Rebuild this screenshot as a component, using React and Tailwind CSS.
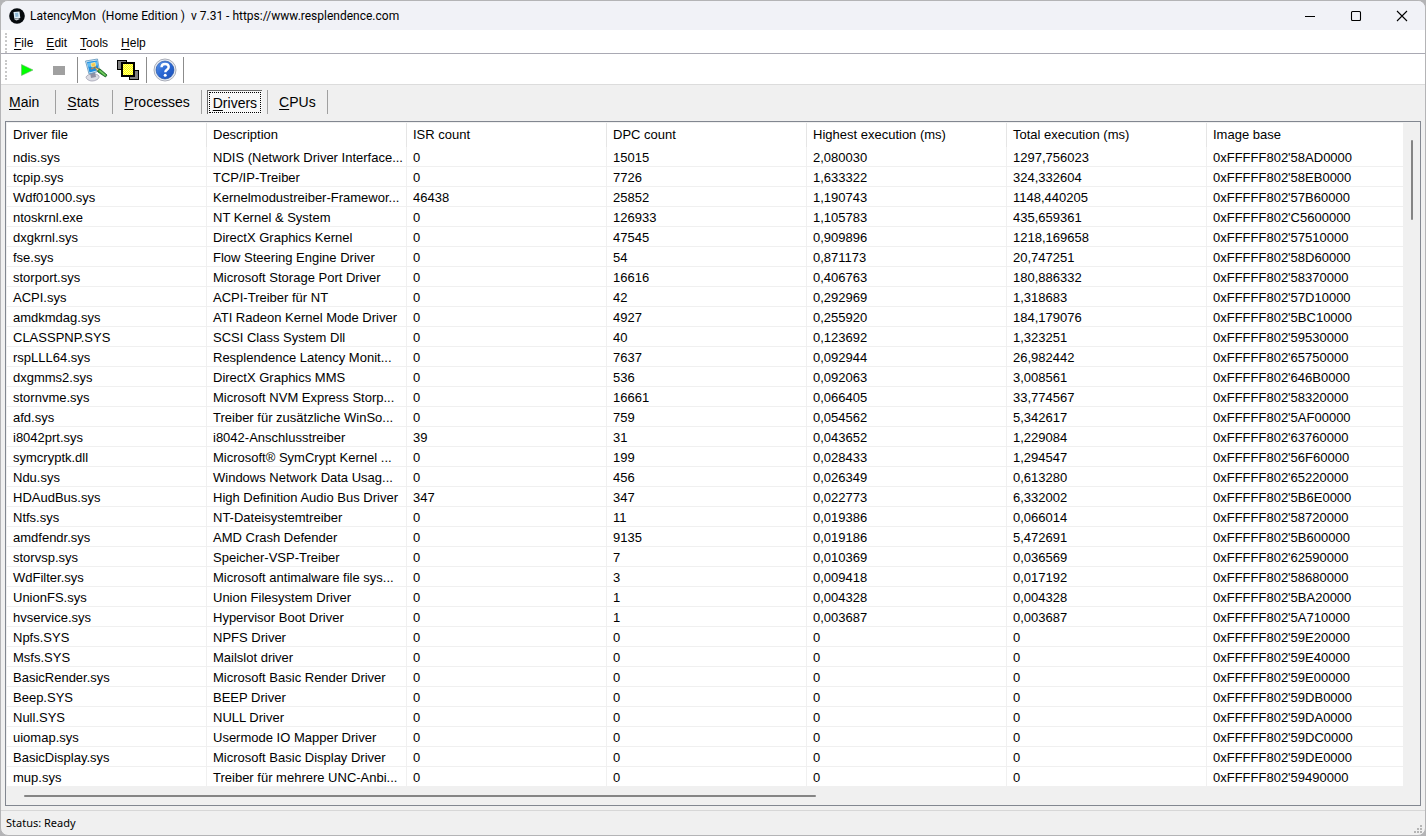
import { useState } from "react";
import clsx from "clsx";

const columns = [
  "Driver file",
  "Description",
  "ISR count",
  "DPC count",
  "Highest execution (ms)",
  "Total execution (ms)",
  "Image base",
];

const drivers = [
  ["ndis.sys", "NDIS (Network Driver Interface...", "0", "15015", "2,080030", "1297,756023", "58AD0000"],
  ["tcpip.sys", "TCP/IP-Treiber", "0", "7726", "1,633322", "324,332604", "58EB0000"],
  ["Wdf01000.sys", "Kernelmodustreiber-Framewor...", "46438", "25852", "1,190743", "1148,440205", "57B60000"],
  ["ntoskrnl.exe", "NT Kernel & System", "0", "126933", "1,105783", "435,659361", "C5600000"],
  ["dxgkrnl.sys", "DirectX Graphics Kernel", "0", "47545", "0,909896", "1218,169658", "57510000"],
  ["fse.sys", "Flow Steering Engine Driver", "0", "54", "0,871173", "20,747251", "58D60000"],
  ["storport.sys", "Microsoft Storage Port Driver", "0", "16616", "0,406763", "180,886332", "58370000"],
  ["ACPI.sys", "ACPI-Treiber für NT", "0", "42", "0,292969", "1,318683", "57D10000"],
  ["amdkmdag.sys", "ATI Radeon Kernel Mode Driver", "0", "4927", "0,255920", "184,179076", "5BC10000"],
  ["CLASSPNP.SYS", "SCSI Class System Dll", "0", "40", "0,123692", "1,323251", "59530000"],
  ["rspLLL64.sys", "Resplendence Latency Monit...", "0", "7637", "0,092944", "26,982442", "65750000"],
  ["dxgmms2.sys", "DirectX Graphics MMS", "0", "536", "0,092063", "3,008561", "646B0000"],
  ["stornvme.sys", "Microsoft NVM Express Storp...", "0", "16661", "0,066405", "33,774567", "58320000"],
  ["afd.sys", "Treiber für zusätzliche WinSo...", "0", "759", "0,054562", "5,342617", "5AF00000"],
  ["i8042prt.sys", "i8042-Anschlusstreiber", "39", "31", "0,043652", "1,229084", "63760000"],
  ["symcryptk.dll", "Microsoft® SymCrypt Kernel ...", "0", "199", "0,028433", "1,294547", "56F60000"],
  ["Ndu.sys", "Windows Network Data Usag...", "0", "456", "0,026349", "0,613280", "65220000"],
  ["HDAudBus.sys", "High Definition Audio Bus Driver", "347", "347", "0,022773", "6,332002", "5B6E0000"],
  ["Ntfs.sys", "NT-Dateisystemtreiber", "0", "11", "0,019386", "0,066014", "58720000"],
  ["amdfendr.sys", "AMD Crash Defender", "0", "9135", "0,019186", "5,472691", "5B600000"],
  ["storvsp.sys", "Speicher-VSP-Treiber", "0", "7", "0,010369", "0,036569", "62590000"],
  ["WdFilter.sys", "Microsoft antimalware file sys...", "0", "3", "0,009418", "0,017192", "58680000"],
  ["UnionFS.sys", "Union Filesystem Driver", "0", "1", "0,004328", "0,004328", "5BA20000"],
  ["hvservice.sys", "Hypervisor Boot Driver", "0", "1", "0,003687", "0,003687", "5A710000"],
  ["Npfs.SYS", "NPFS Driver", "0", "0", "0", "0", "59E20000"],
  ["Msfs.SYS", "Mailslot driver", "0", "0", "0", "0", "59E40000"],
  ["BasicRender.sys", "Microsoft Basic Render Driver", "0", "0", "0", "0", "59E00000"],
  ["Beep.SYS", "BEEP Driver", "0", "0", "0", "0", "59DB0000"],
  ["Null.SYS", "NULL Driver", "0", "0", "0", "0", "59DA0000"],
  ["uiomap.sys", "Usermode IO Mapper Driver", "0", "0", "0", "0", "59DC0000"],
  ["BasicDisplay.sys", "Microsoft Basic Display Driver", "0", "0", "0", "0", "59DE0000"],
  ["mup.sys", "Treiber für mehrere UNC-Anbi...", "0", "0", "0", "0", "59490000"],
];

const menus = ["File", "Edit", "Tools", "Help"];
const tabs = ["Main", "Stats", "Processes", "Drivers", "CPUs"];

export default function App() {
  const [tab, setTab] = useState("Drivers");

  return (
    <div className="h-screen bg-[#b4b4b6]">
      <div className="flex h-full flex-col overflow-hidden rounded-lg border border-[#b4b4b6] bg-[#f0f0f0] font-['Liberation_Sans',Arial,sans-serif] text-black">
        <TitleBar />
        <MenuBar />
        <Toolbar />
        <Tabs active={tab} onSelect={setTab} />
        <DriverList />
        <StatusBar />
      </div>
    </div>
  );
}

function TitleBar() {
  return (
    <header className="flex h-[29px] shrink-0 items-center bg-[#f1f2f7] pl-2">
      <AppIcon />
      <h1 className="ml-[5px] flex-1 whitespace-pre font-[Roboto,sans-serif] text-[12px] leading-4">
        LatencyMon  (Home Edition )  v 7.31 - https://www.resplendence.com
      </h1>
      <WindowButton label="Minimize">
        <path d="M1 6.5h10" />
      </WindowButton>
      <WindowButton label="Maximize">
        <rect x="1.5" y="1.5" width="9" height="9" rx="1" />
      </WindowButton>
      <WindowButton label="Close">
        <path d="M1 1l10 10M11 1L1 11" />
      </WindowButton>
    </header>
  );
}

function WindowButton({ label, children }) {
  return (
    <button type="button" aria-label={label} className="flex h-full w-[46px] items-center justify-center hover:bg-black/10">
      <svg width="12" height="12" viewBox="0 0 12 12" fill="none" stroke="#000" strokeWidth="1.1">
        {children}
      </svg>
    </button>
  );
}

function Gripper() {
  return <span className="h-5 w-0 border-l-2 border-dotted border-[#c8c8c8]" />;
}

// first letter is the keyboard accelerator
function Accel({ text }) {
  return (
    <>
      <span className="underline underline-offset-2">{text[0]}</span>
      {text.slice(1)}
    </>
  );
}

function MenuBar() {
  return (
    <nav className="flex h-[24px] shrink-0 items-center border-b border-[#a9a9b3] bg-white pl-1 pt-0.5">
      <Gripper />
      <div className="flex gap-[13px] pl-[7px]">
        {menus.map((m) => (
          <button key={m} type="button" className="text-[12px] leading-4">
            <Accel text={m} />
          </button>
        ))}
      </div>
    </nav>
  );
}

function Toolbar() {
  return (
    <div className="flex h-[31px] shrink-0 items-center border-b border-[#dcdcdc] bg-white pl-1 pt-0.5">
      <Gripper />
      <div className="ml-1 flex">
        <ToolButton label="Start">
          <svg width="12" height="12" viewBox="0 0 12 12">
            <path d="M.5.5v11L12 6z" fill="#00ff00" stroke="#6fae6f" strokeWidth=".6" />
          </svg>
        </ToolButton>
        <ToolButton label="Stop">
          <svg width="12" height="9" viewBox="0 0 12 9">
            <rect width="12" height="9" fill="#a0a0a0" />
          </svg>
        </ToolButton>
      </div>
      <Divider />
      <div className="ml-0.5 flex">
        <ToolButton label="Options">
          <OptionsIcon />
        </ToolButton>
        <ToolButton label="Windows">
          <WindowsIcon />
        </ToolButton>
      </div>
      <Divider />
      <div className="ml-0.5 flex">
        <ToolButton label="Help">
          <HelpIcon />
        </ToolButton>
      </div>
      <Divider />
    </div>
  );
}

function ToolButton({ label, children }) {
  return (
    <button type="button" aria-label={label} title={label} className="flex h-7 w-8 items-center justify-center">
      {children}
    </button>
  );
}

function Divider() {
  return <span className="ml-0.5 h-[26px] w-px bg-[#8c8c8c]" />;
}

function Tabs({ active, onSelect }) {
  return (
    <div role="tablist" className="flex h-9 shrink-0 items-center pb-0.5 text-[14px] leading-4">
      {tabs.map((t) => (
        <div
          key={t}
          className="flex h-6 min-w-[57px] items-center border-r border-[#a0a0a0] px-[5px] first:min-w-0 first:pl-[2px] first:pr-[10px]"
        >
          <button
            type="button"
            role="tab"
            aria-selected={t === active}
            onClick={() => onSelect(t)}
            className={clsx(
              "flex h-6 items-start p-px",
              t === active
                ? "border-l border-t border-[#696969] bg-[#f8f8f8]"
                : "border border-transparent"
            )}
          >
            <span
              className={clsx(
                "flex h-[21px] items-center border px-[3px]",
                t === active ? "border-dotted border-black pt-px" : "border-transparent pb-px"
              )}
            >
              <Accel text={t} />
            </span>
          </button>
        </div>
      ))}
    </div>
  );
}

function DriverList() {
  return (
    <main className="mx-1 mb-1 flex min-h-0 flex-1 flex-col border border-[#828790] bg-[#f0f0f0]">
      <div className="flex min-h-0 flex-1">
        <div className="min-w-0 flex-1 overflow-hidden border-l border-t border-[#f0f0f0] bg-white">
          <table className="w-full table-fixed border-separate border-spacing-0 text-[13px] leading-4">
            <thead>
              <tr className="h-6">
                {columns.map((c) => (
                  <th key={c} className="w-[200px] border-r border-[#e5e5e5] p-0 px-[6px] text-left font-normal last:w-auto last:border-r-0">
                    {c}
                  </th>
                ))}
              </tr>
            </thead>
            <tbody>
              {drivers.map((row) => (
                <tr key={row[0]} className="h-5">
                  {row.map((cell, i) => (
                    <td key={i} className="truncate border-b border-r border-[#f0f0f0] p-0 pl-[6px] pt-0.5 last:border-r-0">
                      {i === 6 ? `0xFFFFF802'${cell}` : cell}
                    </td>
                  ))}
                </tr>
              ))}
            </tbody>
          </table>
        </div>
        <div className="flex w-[17px] justify-center pt-[18px]">
          <span className="h-20 w-0.5 rounded-full bg-[#858585]" />
        </div>
      </div>
      <div className="flex h-[18px] items-center pl-[18px] pr-[17px]">
        <span className="h-0.5 w-[57.4%] rounded-full bg-[#858585]" />
      </div>
    </main>
  );
}

function StatusBar() {
  return (
    <footer className="flex h-[25px] shrink-0 items-center justify-between border-t border-[#d7d7d7] pl-[5px]">
      <span className="font-['Noto_Sans',sans-serif] text-[11px] leading-4">Status: Ready</span>
      <svg width="10" height="10" viewBox="0 0 10 10" fill="#b5b5b5" className="mr-0.5 self-end">
        <path d="M7 0h2v2H7zM4 3h2v2H4zM7 3h2v2H7zM1 6h2v2H1zM4 6h2v2H4zM7 6h2v2H7z" />
      </svg>
    </footer>
  );
}

function AppIcon() {
  return (
    <svg width="16" height="16" viewBox="0 0 16 16">
      <circle cx="8" cy="8" r="7.8" fill="#05090d" />
      <path d="M4.500 4l6-.6.8 6.500-6 .8z" fill="#dcecf6" />
      <path d="M6 5l3-.3.5 3.800-3 .4z" fill="#8fb9d6" />
      <path d="M5 11.500l4-1.200 2 .7-3.500 1.500z" fill="#c4ccd2" />
    </svg>
  );
}

function OptionsIcon() {
  return (
    <svg width="24" height="24" viewBox="0 0 24 24">
      <path d="M2 19c2-4 11-4 13-1 1 3-4 5-7 5s-6-2-6-4z" fill="#dcdce4" stroke="#9a9aaa" strokeWidth=".7" />
      <path d="M6 15l5-1 1 5-5 1z" fill="#8f90a3" />
      <path d="M1.500 3l12-2 2 12-10.500 3z" fill="#d4e6f4" stroke="#5b93ba" strokeWidth=".8" />
      <path d="M3 4l10-1.500 1.500 9.500-9 2.500z" fill="#1f8fe0" />
      <path d="M3.500 5l9.500-1.500.5 3.500-9 2z" fill="#62bdf3" />
      <path d="M7 5.500l4-1 .8 3.500-4 1z" fill="#f6c64c" stroke="#fff0a5" strokeWidth=".7" />
      <path d="M7 11l5-2" stroke="#e78127" />
      <path d="M13 11l3 0 7 6-1.500 2-7.500-5z" fill="#2f9a35" stroke="#145c20" strokeWidth=".8" />
      <path d="M15.500 12.500l6 5" stroke="#7fd065" strokeWidth="1.200" />
      <path d="M10 9l5 2-1.500 2z" fill="#edd68a" stroke="#735c2b" strokeWidth=".5" />
    </svg>
  );
}

function WindowsIcon() {
  return (
    <svg width="24" height="22" viewBox="0 0 24 22" shapeRendering="crispEdges">
      <defs>
        <pattern id="dither" width="2" height="2" patternUnits="userSpaceOnUse">
          <rect width="2" height="2" fill="#ffff00" />
          <path d="M0 0h1v1H0zM1 1h1v1H1z" fill="#ffff8c" />
        </pattern>
      </defs>
      <rect x="1.500" y="1.500" width="9" height="9" fill="#808080" stroke="#000" />
      <rect x="13.500" y="11.500" width="9" height="9" fill="#808080" stroke="#000" />
      <rect x="6" y="4" width="12" height="13" fill="url(#dither)" stroke="#000" strokeWidth="2" />
    </svg>
  );
}

function HelpIcon() {
  return (
    <svg width="24" height="24" viewBox="0 0 24 24">
      <defs>
        <linearGradient id="help" x1="0" y1="0" x2="1" y2="1">
          <stop offset="0" stopColor="#5f97e8" />
          <stop offset=".5" stopColor="#2a68d4" />
          <stop offset="1" stopColor="#1c50b8" />
        </linearGradient>
      </defs>
      <circle cx="12" cy="12" r="11" fill="#e9edf3" stroke="#a9adb8" />
      <circle cx="12" cy="12" r="9" fill="url(#help)" stroke="#174a9f" strokeWidth=".6" />
      <path d="M8.500 9.300c.1-2.300 1.600-3.300 3.600-3.300s3.600 1.200 3.600 3.100c0 2.800-3.400 2.600-3.400 5.100" fill="none" stroke="#fff" strokeWidth="2.400" />
      <circle cx="12.200" cy="17.300" r="1.500" fill="#fff" />
    </svg>
  );
}
